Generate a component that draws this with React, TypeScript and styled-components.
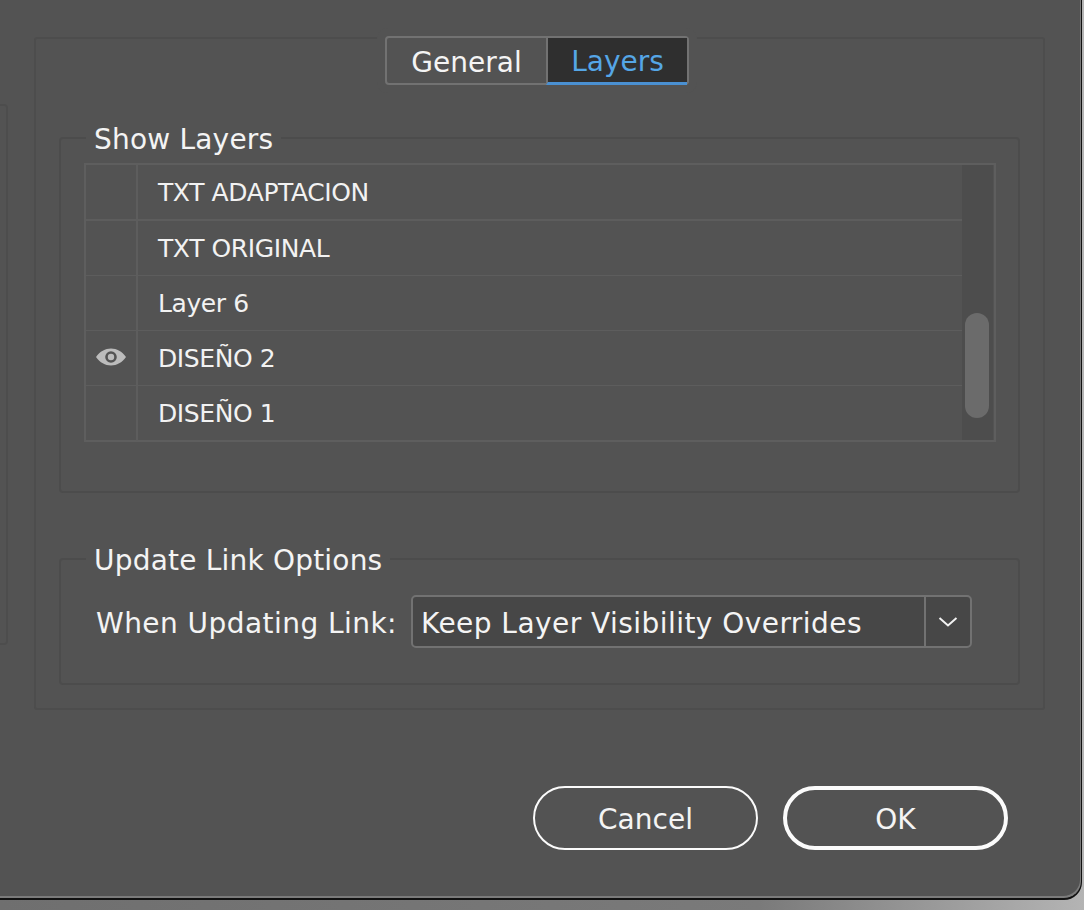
import React from "react";
import styled, { createGlobalStyle } from "styled-components";

const Global = createGlobalStyle`
  html, body { margin: 0; padding: 0; }
  body { width: 1084px; height: 910px; overflow: hidden; font-family: "DejaVu Sans", "Liberation Sans", sans-serif; }
`;

const Desktop = styled.div`
  width: 1084px;
  height: 910px;
  background: linear-gradient(90deg, #6f6f6f 0%, #7a7a7a 70%, #b4b4b4 100%);
  overflow: hidden;
`;

const Dialog = styled.div`
  box-sizing: border-box;
  width: 1083px;
  height: 900px;
  margin-left: -1px;
  background: #535353;
  border-right: 1px solid #111;
  border-bottom: 2px solid #111;
  box-shadow: inset -1px -2px 0 #7b7b7b;
  border-bottom-right-radius: 18px;
  display: flex;
  align-items: flex-start;
  gap: 26px;
  padding-top: 37px;
`;

const SidePanel = styled.div`
  box-sizing: border-box;
  width: 9px;
  height: 541px;
  margin-top: 67px;
  border: 2px solid #4d4d4d;
  border-left: none;
  border-radius: 0 4px 4px 0;
`;

const MainGroup = styled.div`
  box-sizing: border-box;
  width: 1011px;
  height: 673px;
  border: 2px solid #4d4d4d;
  border-radius: 3px;
  display: flex;
  flex-direction: column;
  align-items: center;
  padding: 0 23px;
`;

const TabBar = styled.div`
  box-sizing: border-box;
  display: flex;
  flex: none;
  height: 49px;
  margin-top: -3px;
  margin-right: 5px;
  border: 2px solid #727272;
  border-radius: 4px;
  background: #535353;
  box-shadow: 0 0 0 8px #535353;
`;

const Tab = styled.div<{ $active?: boolean }>`
  box-sizing: border-box;
  display: flex;
  align-items: center;
  justify-content: center;
  width: ${(p) => (p.$active ? "141px" : "159px")};
  padding-top: 2px;
  font-size: 28px;
  color: ${(p) => (p.$active ? "#55a6e6" : "#f4f4f4")};
  background: ${(p) => (p.$active ? "#2f2f2f" : "transparent")};
  border-left: ${(p) => (p.$active ? "2px solid #727272" : "none")};
  border-bottom: ${(p) => (p.$active ? "3px solid #4a90d2" : "none")};
  margin-bottom: ${(p) => (p.$active ? "-2px" : "0")};
  height: 47px;
`;

const Group = styled.fieldset<{ $height: number; $top: number }>`
  box-sizing: border-box;
  width: 961px;
  height: ${(p) => p.$height}px;
  margin: ${(p) => p.$top}px 0 0;
  padding: 0 23px;
  min-width: 0;
  border: 2px solid #4c4c4c;
  border-radius: 4px;
`;

const Legend = styled.legend`
  margin-left: 2px;
  padding: 4px 8px 0;
  font-size: 28px;
  line-height: 40px;
  color: #f4f4f4;
  letter-spacing: 0.2px;
`;

const LayerList = styled.div`
  box-sizing: border-box;
  width: 912px;
  height: 279px;
  margin-top: 3px;
  border: 2px solid #5e5e5e;
  display: flex;
`;

const Rows = styled.div`
  flex: 1;
  min-width: 0;
`;

const Row = styled.div<{ $thick?: boolean }>`
  box-sizing: border-box;
  height: 55px;
  display: flex;
  border-bottom: ${(p) => (p.$thick ? "2px" : "1px")} solid #5d5d5d;
  &:first-child { height: 56px; }
  &:last-child { border-bottom: none; }
`;

const EyeCell = styled.div`
  box-sizing: border-box;
  width: 52px;
  border-right: 2px solid #5d5d5d;
  display: flex;
  align-items: center;
  justify-content: center;
  padding-bottom: 3px;
`;

const LayerName = styled.div`
  display: flex;
  align-items: center;
  padding-left: 20px;
  font-size: 25px;
  color: #f2f2f2;
  letter-spacing: -0.4px;
`;

const Track = styled.div`
  box-sizing: border-box;
  width: 31px;
  margin-right: 1px;
  background: #4d4d4d;
  padding: 148px 3px 0;
`;

const Thumb = styled.div`
  width: 24px;
  height: 105px;
  border-radius: 12px;
  background: #6b6b6b;
`;

const OptionRow = styled.div`
  display: flex;
  align-items: center;
  gap: 13px;
  margin-top: 14px;
  padding-left: 12px;
`;

const OptionLabel = styled.span`
  flex: none;
  width: 302px;
  padding-top: 3px;
  font-size: 28px;
  color: #f4f4f4;
  letter-spacing: 0.45px;
  white-space: nowrap;
`;

const Select = styled.div`
  box-sizing: border-box;
  width: 561px;
  height: 53px;
  display: flex;
  border: 2px solid #727272;
  border-radius: 5px;
  background: #474747;
`;

const SelectValue = styled.div`
  flex: 1;
  display: flex;
  align-items: center;
  padding: 3px 0 0 8px;
  font-size: 28px;
  color: #f4f4f4;
  letter-spacing: 0.45px;
  white-space: nowrap;
`;

const SelectArrow = styled.div`
  box-sizing: border-box;
  width: 46px;
  border-left: 2px solid #727272;
  display: flex;
  align-items: center;
  justify-content: center;
`;

const Footer = styled.div`
  position: absolute;
  left: 533px;
  top: 786px;
  display: flex;
  gap: 25px;
`;

const Button = styled.div<{ $primary?: boolean }>`
  box-sizing: border-box;
  width: 225px;
  height: 64px;
  display: flex;
  align-items: center;
  justify-content: center;
  padding-top: 2px;
  border: ${(p) => (p.$primary ? "4px" : "2px")} solid #fbfbfb;
  border-radius: 32px;
  font-size: 28px;
  color: #f4f4f4;
`;

const Eye = () => (
  <svg width="30" height="18" viewBox="0 0 30 18" aria-hidden="true">
    <path
      fillRule="evenodd"
      fill="#bcbcbc"
      d="M0 9C4 3.4 9.2 0.5 15 0.5S26 3.4 30 9C26 14.6 20.8 17.5 15 17.5S4 14.6 0 9ZM15 3.2A5.8 5.8 0 1 0 15 14.8A5.8 5.8 0 1 0 15 3.2ZM15 5.8A3.2 3.2 0 1 1 15 12.2A3.2 3.2 0 1 1 15 5.8Z"
    />
    <circle cx="15" cy="9" r="2.2" fill="#bcbcbc" />
  </svg>
);

const Chevron = () => (
  <svg width="20" height="12" viewBox="0 0 20 12" aria-hidden="true">
    <path d="M1.5 2L10 9.5L18.5 2" fill="none" stroke="#f2f2f2" strokeWidth="2" />
  </svg>
);

const layers = [
  { name: "TXT ADAPTACION" },
  { name: "TXT ORIGINAL" },
  { name: "Layer 6" },
  { name: "DISEÑO 2", visible: true },
  { name: "DISEÑO 1" },
];

export default function App() {
  return (
    <Desktop>
      <Global />
      <Dialog>
        <SidePanel />
        <MainGroup>
          <TabBar>
            <Tab>General</Tab>
            <Tab $active>Layers</Tab>
          </TabBar>
          <Group $height={377} $top={31}>
            <Legend>Show Layers</Legend>
            <LayerList>
              <Rows>
                {layers.map((l, i) => (
                  <Row key={l.name} $thick={i === 0}>
                    <EyeCell>{l.visible && <Eye />}</EyeCell>
                    <LayerName>{l.name}</LayerName>
                  </Row>
                ))}
              </Rows>
              <Track>
                <Thumb />
              </Track>
            </LayerList>
          </Group>
          <Group $height={148} $top={44}>
            <Legend>Update Link Options</Legend>
            <OptionRow>
              <OptionLabel>When Updating Link:</OptionLabel>
              <Select>
                <SelectValue>Keep Layer Visibility Overrides</SelectValue>
                <SelectArrow>
                  <Chevron />
                </SelectArrow>
              </Select>
            </OptionRow>
          </Group>
        </MainGroup>
        <Footer>
          <Button>Cancel</Button>
          <Button $primary>OK</Button>
        </Footer>
      </Dialog>
    </Desktop>
  );
}
